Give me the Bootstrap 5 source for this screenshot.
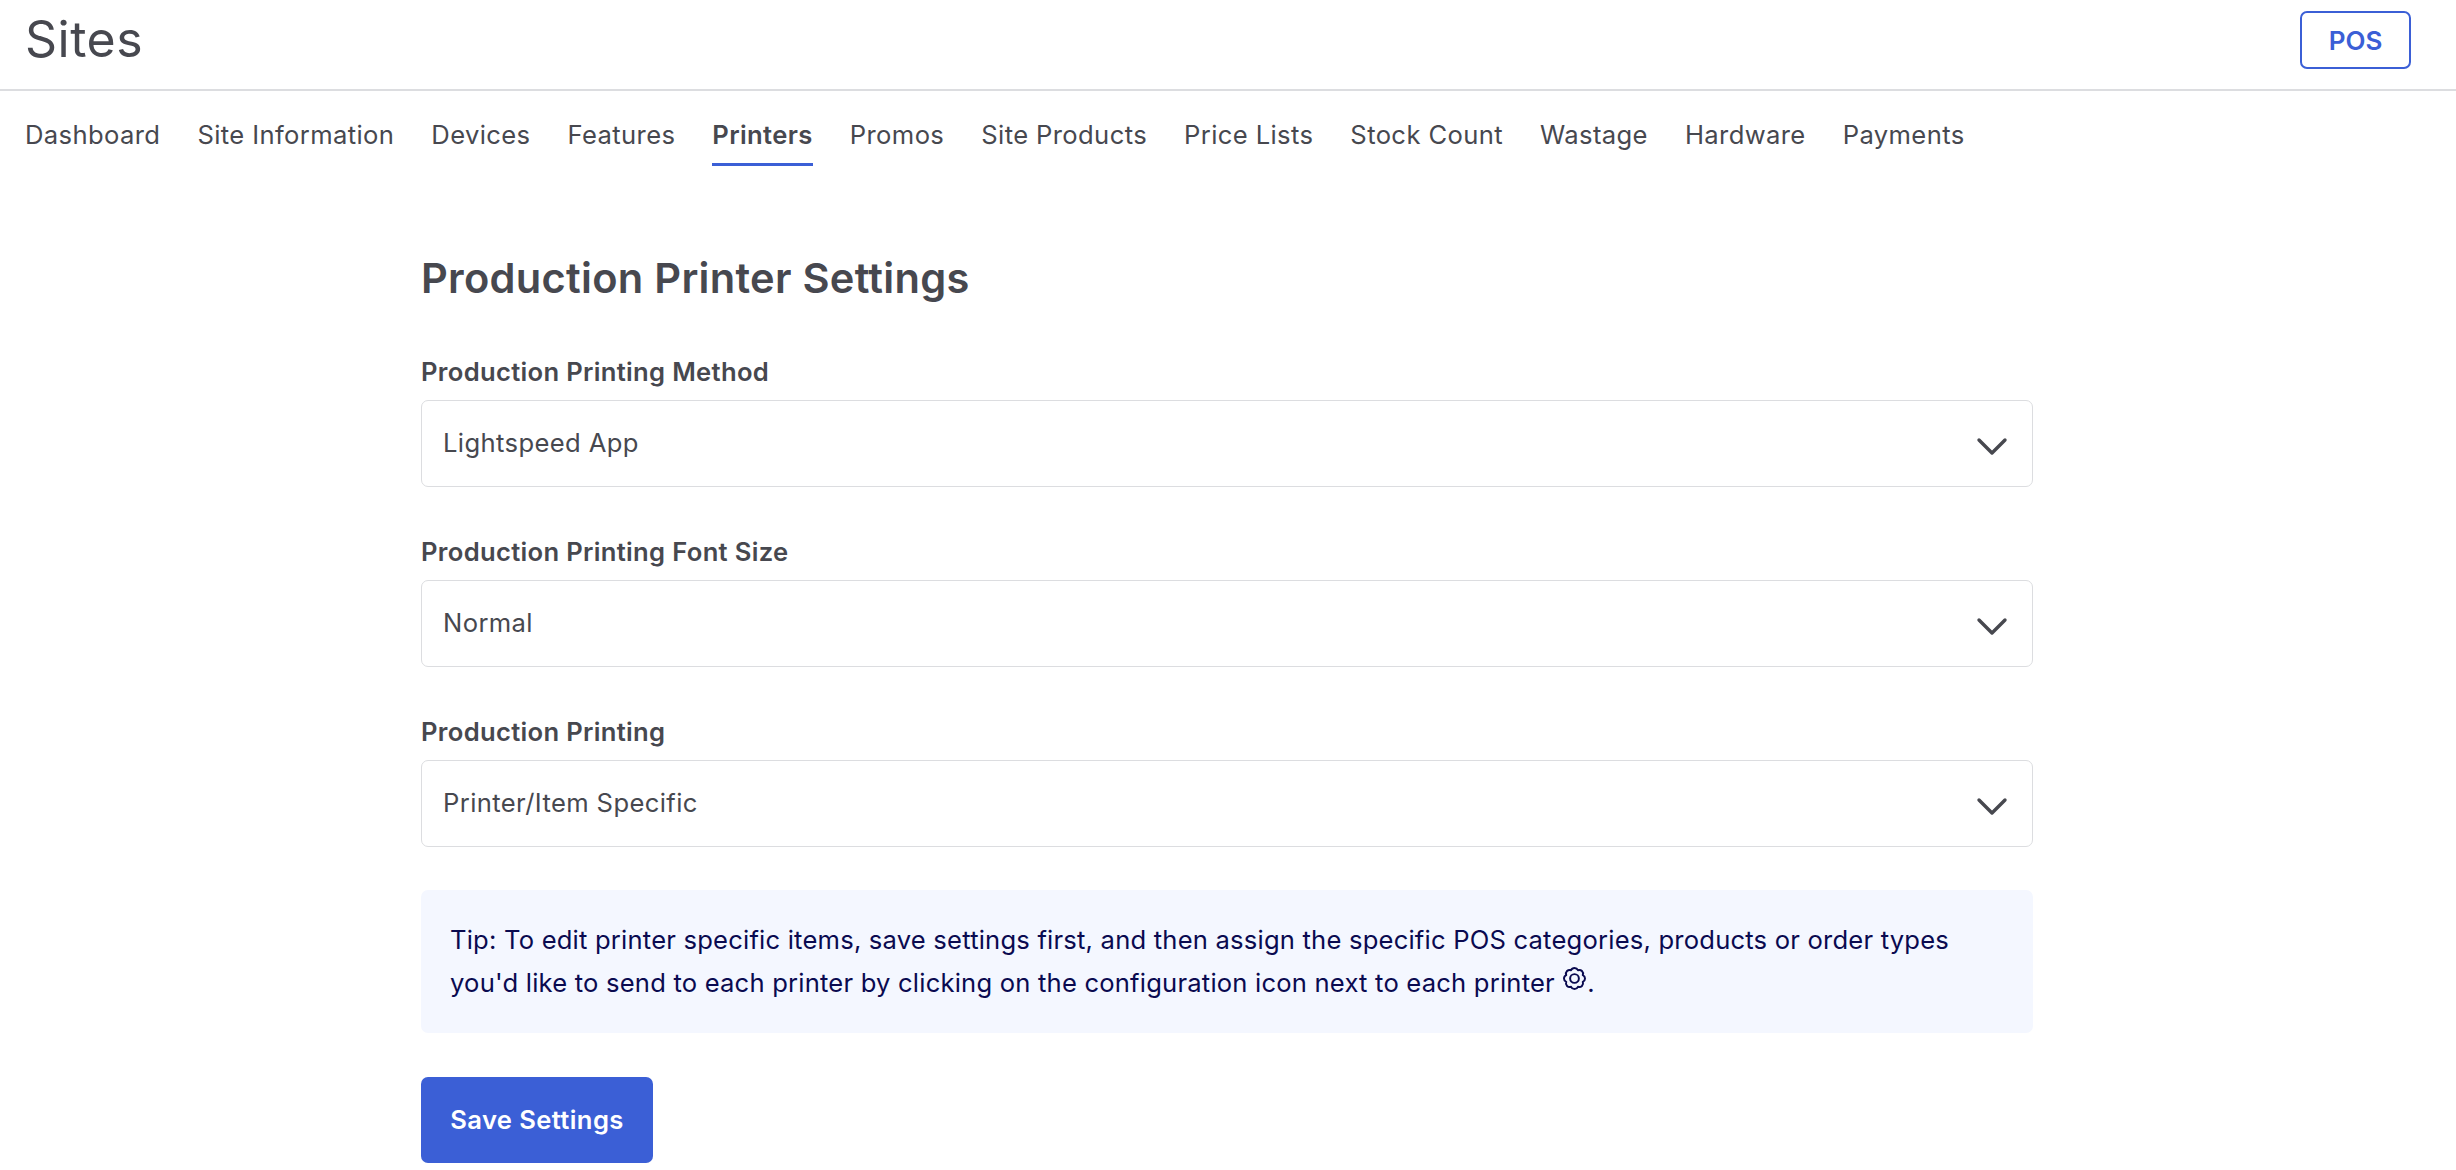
<!DOCTYPE html>
<html lang="en">
<head>
<meta charset="utf-8">
<title>Sites</title>
<link href="https://cdn.jsdelivr.net/npm/bootstrap@5.3.0/dist/css/bootstrap.min.css" rel="stylesheet">
<style>
body { font-family: "Inter", "Liberation Sans", sans-serif; color: #47484f; background: #fff; font-size: 25.6px; letter-spacing: .38px; }
.top-bar { height: 91px; border-bottom: 2px solid #dcdde0; padding: 11px 45px 0 25px; align-items: flex-start; }
.page-name { font-size: 50px; font-weight: 400; line-height: 56px; margin: 0; color: #47484f; letter-spacing: .5px; }
.pos-btn { width: 111px; height: 58px; border: 2px solid #3b5fd6; border-radius: 7px; color: #3b5fd6; font-size: 26px; font-weight: 600; padding: 0; background: #fff; }
.site-tabs { padding: 0 25px; gap: 37px; height: 76px; }
.site-tabs .nav-link { color: #47484f; padding: 29px 0 0; font-size: 25.6px; line-height: 30px; height: 75px; box-sizing: border-box; }
.site-tabs .nav-link.active { color: #47484f; font-weight: 600; border-bottom: 3px solid #3b5fd6; }
.form-wrap { width: 1612px; margin: 0 0 0 421px; padding-top: 86px; }
.form-wrap h2 { font-size: 41.6px; font-weight: 600; line-height: 50px; margin: 0 0 54px; color: #47484f; letter-spacing: .28px; }
.field-block { margin-bottom: 50px; }
.field-block.last-field { margin-bottom: 43px; }
.field-block label { font-size: 25.6px; font-weight: 600; line-height: 30px; margin: 0 0 13px; display: block; color: #47484f; letter-spacing: .32px; }
.field-block .form-select { height: 87px; border: 1.5px solid #dcdde0; border-radius: 7px; padding: 0 60px 0 21px; font-size: 25.6px; letter-spacing: .38px; color: #47484f;
  background-size: 32px 20px; background-position: right 24px top calc(50% + 3px);
  background-image: url("data:image/svg+xml,%3Csvg xmlns='http://www.w3.org/2000/svg' viewBox='0 0 32 20'%3E%3Cpath d='M3 3l13 13L29 3' fill='none' stroke='%2347484f' stroke-width='3.4' stroke-linecap='round' stroke-linejoin='round'/%3E%3C/svg%3E"); }
.tip-box { background: #f4f7ff; color: #0a0a50; border-radius: 7px; padding: 28px 29px; line-height: 43px; font-size: 25.6px; letter-spacing: .2px; height: 143px; margin-bottom: 44px; }
.gear-ico { width: 25px; height: 25px; vertical-align: 1px; }
.save-btn { width: 232px; height: 86px; background: #3b5fd6; border: 0; border-radius: 7px; color: #fff; font-weight: 600; font-size: 25.6px; letter-spacing: .38px; padding: 0; }
</style>
</head>
<body>
<header class="top-bar d-flex justify-content-between">
  <h1 class="page-name">Sites</h1>
  <button type="button" class="btn pos-btn">POS</button>
</header>
<ul class="nav site-tabs">
  <li class="nav-item"><a class="nav-link" href="#">Dashboard</a></li>
  <li class="nav-item"><a class="nav-link" href="#">Site Information</a></li>
  <li class="nav-item"><a class="nav-link" href="#">Devices</a></li>
  <li class="nav-item"><a class="nav-link" href="#">Features</a></li>
  <li class="nav-item"><a class="nav-link active" href="#">Printers</a></li>
  <li class="nav-item"><a class="nav-link" href="#">Promos</a></li>
  <li class="nav-item"><a class="nav-link" href="#">Site Products</a></li>
  <li class="nav-item"><a class="nav-link" href="#">Price Lists</a></li>
  <li class="nav-item"><a class="nav-link" href="#">Stock Count</a></li>
  <li class="nav-item"><a class="nav-link" href="#">Wastage</a></li>
  <li class="nav-item"><a class="nav-link" href="#">Hardware</a></li>
  <li class="nav-item"><a class="nav-link" href="#">Payments</a></li>
</ul>
<main class="form-wrap">
  <h2>Production Printer Settings</h2>
  <div class="field-block">
    <label for="m1">Production Printing Method</label>
    <select id="m1" class="form-select"><option>Lightspeed App</option></select>
  </div>
  <div class="field-block">
    <label for="m2">Production Printing Font Size</label>
    <select id="m2" class="form-select"><option>Normal</option></select>
  </div>
  <div class="field-block last-field">
    <label for="m3">Production Printing</label>
    <select id="m3" class="form-select"><option>Printer/Item Specific</option></select>
  </div>
  <div class="tip-box">Tip: To edit printer specific items, save settings first, and then assign the specific POS categories, products or order types<br>you'd like to send to each printer by clicking on the configuration icon next to each printer <svg class="gear-ico" viewBox="0 0 24 24" fill="none" stroke="#0a0a50" stroke-width="1.9" stroke-linejoin="round"><path d="M19.95 8.71A3.6 3.6 0 0 1 19.95 15.29A3.6 3.6 0 0 1 15.29 19.95A3.6 3.6 0 0 1 8.71 19.95A3.6 3.6 0 0 1 4.05 15.29A3.6 3.6 0 0 1 4.05 8.71A3.6 3.6 0 0 1 8.71 4.05A3.6 3.6 0 0 1 15.29 4.05A3.6 3.6 0 0 1 19.95 8.71Z"/><circle cx="12" cy="12" r="4.2"/></svg>.</div>
  <button type="button" class="btn save-btn">Save Settings</button>
</main>
<script src="https://cdn.jsdelivr.net/npm/bootstrap@5.3.0/dist/js/bootstrap.bundle.min.js"></script>
</body>
</html>
